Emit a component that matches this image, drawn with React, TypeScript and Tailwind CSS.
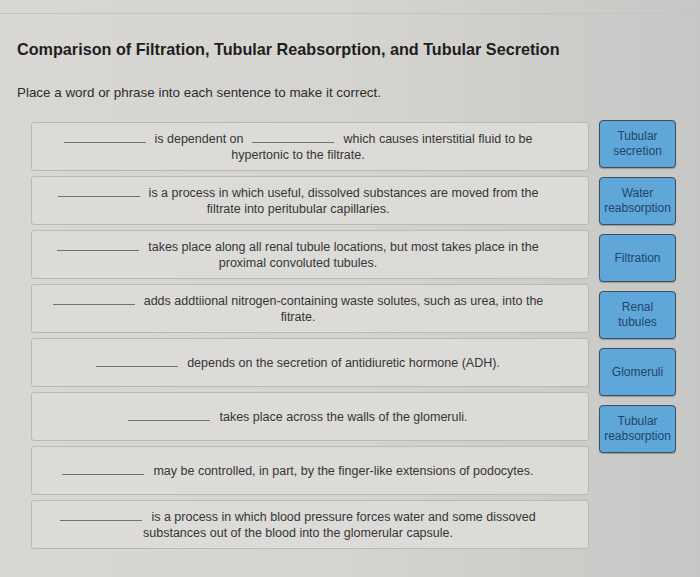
import { Fragment } from "react";

const SENTENCES: string[][] = [
  ["___", "is dependent on", "___", "which causes interstitial fluid to be hypertonic to the filtrate."],
  ["___", "is a process in which useful, dissolved substances are moved from the filtrate into peritubular capillaries."],
  ["___", "takes place along all renal tubule locations, but most takes place in the proximal convoluted tubules."],
  ["___", "adds addtiional nitrogen-containing waste solutes, such as urea, into the fitrate."],
  ["___", "depends on the secretion of antidiuretic hormone (ADH)."],
  ["___", "takes place across the walls of the glomeruli."],
  ["___", "may be controlled, in part, by the finger-like extensions of podocytes."],
  ["___", "is a process in which blood pressure forces water and some dissoved substances out of the blood into the glomerular capsule."],
];

const CHOICES: string[][] = [
  ["Tubular", "secretion"],
  ["Water", "reabsorption"],
  ["Filtration"],
  ["Renal", "tubules"],
  ["Glomeruli"],
  ["Tubular", "reabsorption"],
];

function Blank({ first }: { first: boolean }) {
  return (
    <span
      className={
        first
          ? "mr-[9px] inline-block w-[82px] border-b border-[#707070]"
          : "mx-[9px] inline-block w-[82px] border-b border-[#707070]"
      }
    />
  );
}

function SentenceCard({ parts }: { parts: string[] }) {
  return (
    <div className="flex h-[49px] items-center rounded-[3px] border border-[#bab9b6] bg-[#dcdbd8] pl-[18px] pr-[42px]">
      <p className="w-full text-center text-[12.5px] leading-[16px] text-[#353535]">
        {parts.map((part, i) =>
          part === "___" ? <Blank key={i} first={i === 0} /> : <Fragment key={i}>{part}</Fragment>
        )}
      </p>
    </div>
  );
}

function ChoiceTile({ lines }: { lines: string[] }) {
  return (
    <div className="flex h-[48px] w-[77px] flex-col items-center justify-center rounded-[4px] border border-[#3c4e5f] bg-[#5fa6d9] text-center text-[12px] leading-[15px] text-[#22456a] shadow-[0_1px_1px_rgba(0,0,0,0.25)]">
      {lines.map((l) => (
        <span key={l}>{l}</span>
      ))}
    </div>
  );
}

export default function App() {
  return (
    <div className="h-[577px] w-[700px] overflow-hidden bg-gradient-to-r from-[#d9d7d4] via-[#d5d4d1] to-[#c7c7c5] font-['Liberation_Sans',Arial,sans-serif]">
      <div className="h-[14px] border-b border-[#c4c3c0]" />

      <div className="px-[17px] pt-[25px]">
        <h1 className="text-[16.2px] font-bold leading-[20px] text-[#1e1e1e]">
          Comparison of Filtration, Tubular Reabsorption, and Tubular Secretion
        </h1>
        <p className="mt-[26px] text-[13.4px] leading-[16px] text-[#2d2d2d]">
          Place a word or phrase into each sentence to make it correct.
        </p>
      </div>

      <div className="mt-[19px] flex pl-[31px]">
        <div className="flex w-[558px] flex-col gap-[5px] pt-[2px]">
          {SENTENCES.map((parts, i) => (
            <SentenceCard key={i} parts={parts} />
          ))}
        </div>
        <div className="ml-[10px] flex flex-col gap-[9px]">
          {CHOICES.map((lines, i) => (
            <ChoiceTile key={i} lines={lines} />
          ))}
        </div>
      </div>
    </div>
  );
}
